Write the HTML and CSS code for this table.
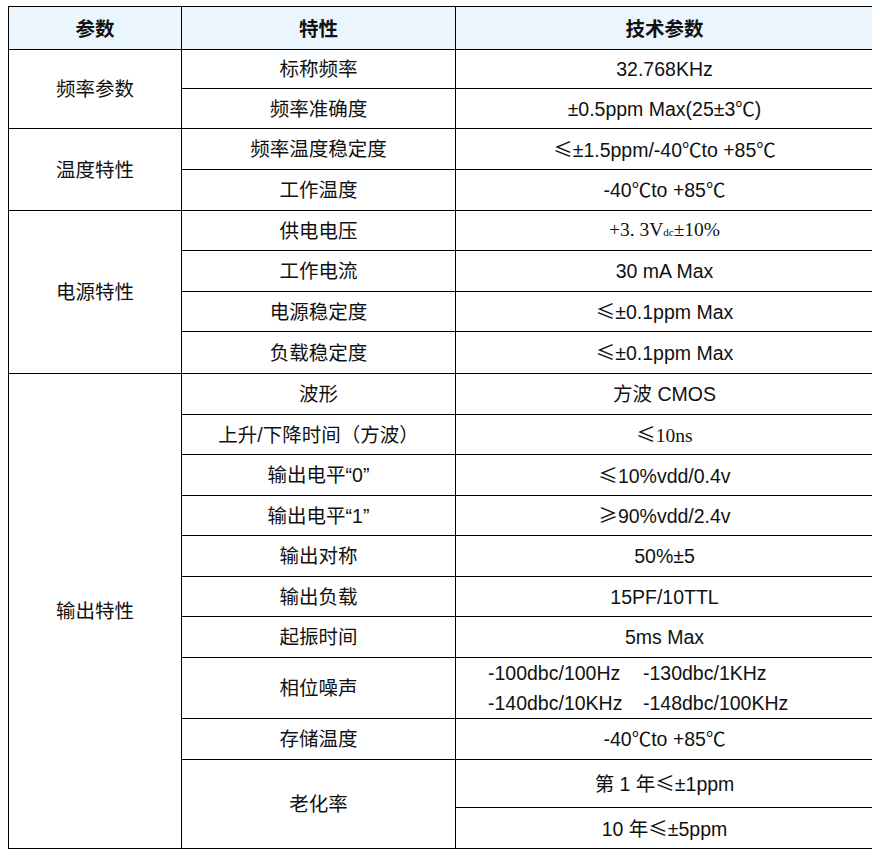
FILE: index.html
```html
<!DOCTYPE html>
<html lang="zh-CN">
<head>
<meta charset="utf-8">
<title>技术参数</title>
<link rel="stylesheet" href="styles.css">
</head>
<body>
<table class="spec">
  <colgroup>
    <col class="c1">
    <col class="c2">
    <col class="c3">
  </colgroup>
  <thead>
    <tr class="r43">
      <th>参数</th>
      <th>特性</th>
      <th>技术参数</th>
    </tr>
  </thead>
  <tbody>
    <tr class="r39">
      <td rowspan="2">频率参数</td>
      <td>标称频率</td>
      <td>32.768KHz</td>
    </tr>
    <tr class="r40">
      <td>频率准确度</td>
      <td>±0.5ppm Max(25±3℃)</td>
    </tr>
    <tr class="r41">
      <td rowspan="2">温度特性</td>
      <td>频率温度稳定度</td>
      <td><span class="sym">≤</span>±1.5ppm/-40℃to +85℃</td>
    </tr>
    <tr class="r41">
      <td>工作温度</td>
      <td>-40℃to +85℃</td>
    </tr>
    <tr class="r40">
      <td rowspan="4">电源特性</td>
      <td>供电电压</td>
      <td class="serif">+3. 3V<span class="sub">dc</span>±10%</td>
    </tr>
    <tr class="r41">
      <td>工作电流</td>
      <td>30 mA Max</td>
    </tr>
    <tr class="r40">
      <td>电源稳定度</td>
      <td><span class="sym">≤</span>±0.1ppm Max</td>
    </tr>
    <tr class="r42">
      <td>负载稳定度</td>
      <td><span class="sym">≤</span>±0.1ppm Max</td>
    </tr>
    <tr class="r41">
      <td rowspan="11">输出特性</td>
      <td>波形</td>
      <td>方波 CMOS</td>
    </tr>
    <tr class="r40">
      <td>上升/下降时间（方波）</td>
      <td class="serif"><span class="sym">≤</span>10ns</td>
    </tr>
    <tr class="r41">
      <td>输出电平“0”</td>
      <td><span class="sym">≤</span>10%vdd/0.4v</td>
    </tr>
    <tr class="r40">
      <td>输出电平“1”</td>
      <td><span class="sym">≥</span>90%vdd/2.4v</td>
    </tr>
    <tr class="r41">
      <td>输出对称</td>
      <td>50%±5</td>
    </tr>
    <tr class="r40">
      <td>输出负载</td>
      <td>15PF/10TTL</td>
    </tr>
    <tr class="r41">
      <td>起振时间</td>
      <td>5ms Max</td>
    </tr>
    <tr class="r60">
      <td>相位噪声</td>
      <td class="noise">
        <div class="noise-grid">
          <span>-100dbc/100Hz</span><span>-130dbc/1KHz</span>
          <span>-140dbc/10KHz</span><span>-148dbc/100KHz</span>
        </div>
      </td>
    </tr>
    <tr class="r41">
      <td>存储温度</td>
      <td>-40℃to +85℃</td>
    </tr>
    <tr class="r48">
      <td rowspan="2">老化率</td>
      <td>第 1 年<span class="sym">≤</span>±1ppm</td>
    </tr>
    <tr class="r41">
      <td>10 年<span class="sym">≤</span>±5ppm</td>
    </tr>
  </tbody>
</table>
</body>
</html>
```

FILE: styles.css
```css
html, body {
  background: #ffffff;
}

body {
  margin: 6px 8px;
  font-family: "Liberation Sans", "Noto Sans CJK SC", sans-serif;
  font-size: 19.5px;
  color: #111111;
}

.spec {
  width: 865px;
  border-collapse: collapse;
  table-layout: fixed;
}

.c1 { width: 173px; }
.c2 { width: 274px; }
.c3 { width: 418px; }

.spec th,
.spec td {
  border: 1px solid #000000;
  padding: 0;
  text-align: center;
  vertical-align: middle;
  line-height: 24px;
}

.spec th {
  background: #eaf5fd;
  font-weight: bold;
  font-family: "Noto Sans CJK SC", sans-serif;
}

.r39 { height: 39px; }
.r40 { height: 40px; }
.r41 { height: 41px; }
.r42 { height: 42px; }
.r43 { height: 43px; }
.r48 { height: 48px; }
.r60 { height: 60px; }

.sym {
  font-family: "Noto Sans CJK SC", sans-serif;
}

.serif {
  font-family: "Liberation Serif", "Noto Sans CJK SC", serif;
}

.sub {
  font-size: 11px;
}

.spec td.noise {
  text-align: left;
  padding-left: 32px;
}

.noise-grid {
  display: grid;
  grid-template-columns: 155px auto;
  line-height: 30px;
}
```
